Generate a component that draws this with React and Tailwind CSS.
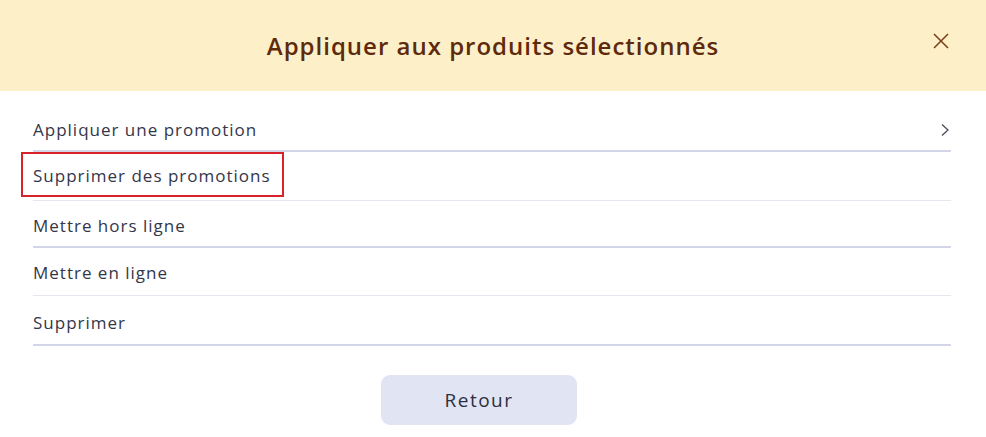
import React from "react";

const font = { fontFamily: "'Open Sans', 'Noto Sans', sans-serif" };

function Row({ label, border, chevron, highlighted, h = "h-[48px]", pt = "pt-[5px]" }) {
  return (
    <div className={`flex items-center justify-between ${h} ${pt} ${border}`}>
      <span className="relative text-[17px] tracking-[1px] text-[#34364a]">
        {highlighted && (
          <span className="absolute left-[-12px] right-[-13px] top-[-11px] bottom-[-8px] border-2 border-[#d8232a]" />
        )}
        {label}
      </span>
      {chevron && (
        <svg width="10" height="14" viewBox="0 0 10 14" className="mr-[1px]">
          <path d="M2 1.5 L8 7 L2 12.5" fill="none" stroke="#4a4c5c" strokeWidth="1.3" />
        </svg>
      )}
    </div>
  );
}

export default function App() {
  return (
    <div className="w-[986px] h-[437px] bg-white" style={font}>
      <div className="h-[91px] bg-[#fdf0c9] flex items-center justify-center relative">
        <h1 className="text-[24px] font-semibold tracking-[1px] text-[#5e2a0c]">Appliquer aux produits sélectionnés</h1>
        <svg width="16" height="16" viewBox="0 0 16 16" className="absolute right-[37px] top-[33px]">
          <path d="M1 1 L15 15 M15 1 L1 15" stroke="#7a3d1a" strokeWidth="1.5" />
        </svg>
      </div>
      <div className="pl-[33px] pr-[35px] mt-[13px]">
        <Row label="Appliquer une promotion" border="border-b-2 border-[#d3d5e8]" chevron />
        <Row label="Supprimer des promotions" border="border-b border-[#e6e7ef]" highlighted h="h-[49px]" pt="pt-0" />
        <Row label="Mettre hors ligne" border="border-b-2 border-[#d3d5e8]" h="h-[47px]" />
        <Row label="Mettre en ligne" border="border-b border-[#e6e7ef]" pt="pt-[2px]" />
        <Row label="Supprimer" border="border-b-2 border-[#d3d5e8]" h="h-[50px]" />
      </div>
      <div className="flex justify-center pr-[28px] mt-[29px]">
        <button className="w-[196px] h-[50px] rounded-[9px] bg-[#e1e4f3] text-[19px] tracking-[1.5px] text-[#2d2f40]">Retour</button>
      </div>
    </div>
  );
}
